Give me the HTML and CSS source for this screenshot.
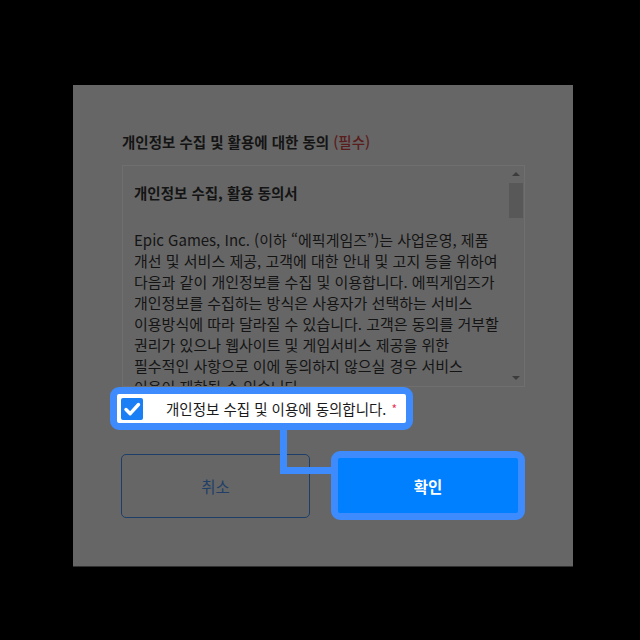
FILE: index.html
```html
<!DOCTYPE html>
<html lang="ko">

<head>
  <meta charset="UTF-8">
  <meta name="viewport" content="width=device-width, initial-scale=1.0">
  <title>개인정보 수집 및 활용 동의</title>
  <link rel="stylesheet" href="styles.css">
</head>

<body>
  <div class="dialog">

    <h2 class="title">개인정보 수집 및 활용에 대한 동의 <span class="required">(필수)</span></h2>

    <div class="terms">
      <div class="terms-body">
        <h3 class="terms-title">개인정보 수집, 활용 동의서</h3>
        <p class="terms-text">Epic Games, Inc. (이하 “에픽게임즈”)는 사업운영, 제품<br>
          개선 및 서비스 제공, 고객에 대한 안내 및 고지 등을 위하여<br>
          다음과 같이 개인정보를 수집 및 이용합니다. 에픽게임즈가<br>
          개인정보를 수집하는 방식은 사용자가 선택하는 서비스<br>
          이용방식에 따라 달라질 수 있습니다. 고객은 동의를 거부할<br>
          권리가 있으나 웹사이트 및 게임서비스 제공을 위한<br>
          필수적인 사항으로 이에 동의하지 않으실 경우 서비스<br>
          이용이 제한될 수 있습니다.</p>
      </div>
      <div class="scrollbar">
        <span class="arrow-up"></span>
        <span class="thumb"></span>
        <span class="arrow-down"></span>
      </div>
    </div>

    <label class="agree">
      <span class="checkbox">
        <svg viewBox="0 0 22 22" width="22" height="22">
          <path d="M5 11.5l4.2 4.2L17.5 6.5" fill="none" stroke="#fff" stroke-width="3.4" stroke-linecap="round" stroke-linejoin="round" />
        </svg>
      </span>
      <span class="agree-text">개인정보 수집 및 이용에 동의합니다.</span>
      <span class="star">*</span>
    </label>

    <div class="actions">
      <button class="btn btn-cancel">취소</button>
      <button class="btn btn-confirm">확인</button>
    </div>

    <!-- highlight connector between checkbox and confirm -->
    <div class="connector"></div>
  </div>
</body>

</html>
```

FILE: styles.css
```css
*,
*::before,
*::after {
  box-sizing: border-box;
}

body {
  margin: 0;
  min-height: 640px;
  background: #000;
  font-family: "Noto Sans CJK KR", "Noto Sans", sans-serif;
  color: #141414;
}

.dialog {
  position: relative;
  width: 500px;
  height: 482px;
  margin: 85px 0 0 73px;
  padding: 48px 48px 0 49px;
  background: #666;
  border-bottom: 1px solid #303030;
}

.title {
  margin: 0 0 14px;
  font-size: 14.5px;
  line-height: 18px;
  font-weight: 700;
}

.required {
  font-weight: 500;
  color: #5a1d1d;
}

.terms {
  display: flex;
  height: 222px;
  border: 1px solid #6f6f6f;
  overflow: hidden;
}

.terms-body {
  flex: 1;
  padding: 18px 8px 0 11px;
  overflow: hidden;
}

.terms-title {
  margin: 0 0 27px;
  font-size: 14.5px;
  line-height: 18px;
  font-weight: 700;
}

.terms-text {
  margin: 0;
  font-size: 15px;
  line-height: 21px;
  white-space: nowrap;
}

.scrollbar {
  display: flex;
  flex-direction: column;
  align-items: center;
  width: 15px;
  padding: 6px 1px 6px 0;
}

.arrow-up,
.arrow-down {
  width: 0;
  height: 0;
  border-left: 4px solid transparent;
  border-right: 4px solid transparent;
}

.arrow-up {
  border-bottom: 4px solid #3c3c3c;
}

.arrow-down {
  margin-top: auto;
  border-top: 4px solid #3c3c3c;
}

.thumb {
  width: 14px;
  height: 35px;
  margin-top: 7px;
  background: #585858;
}

.agree {
  display: flex;
  align-items: center;
  width: 303px;
  height: 43px;
  margin: 0 0 0 -12px;
  padding: 0 4px;
  background: #fff;
  border: 7px solid #3d8bfd;
  border-radius: 9px;
  font-size: 14.5px;
}

.checkbox {
  display: flex;
  width: 22px;
  height: 22px;
  border-radius: 2px;
  background: #1a7ff5;
}

.agree-text {
  margin-left: 23px;
  color: #1a1a1a;
}

.star {
  margin-left: 5px;
  font-size: 12px;
  color: #e8335a;
}

.actions {
  display: flex;
  align-items: center;
  gap: 21px;
  margin-top: 21px;
}

.btn {
  font-family: inherit;
  font-size: 15.5px;
  cursor: pointer;
}

.btn-cancel {
  width: 191px;
  height: 64px;
  margin-left: -1px;
  background: none;
  border: 1px solid #1d3e68;
  border-radius: 5px;
  color: #213f66;
}

.btn-confirm {
  position: relative;
  z-index: 1;
  width: 196px;
  height: 69px;
  background: #0080ff;
  border: 7px solid #3d8bfd;
  border-radius: 9px;
  color: #fff;
  font-weight: 700;
}

.connector {
  position: absolute;
  left: 207px;
  top: 345px;
  width: 56px;
  height: 44px;
  border-left: 7px solid #3d8bfd;
  border-bottom: 7px solid #3d8bfd;
}
```
